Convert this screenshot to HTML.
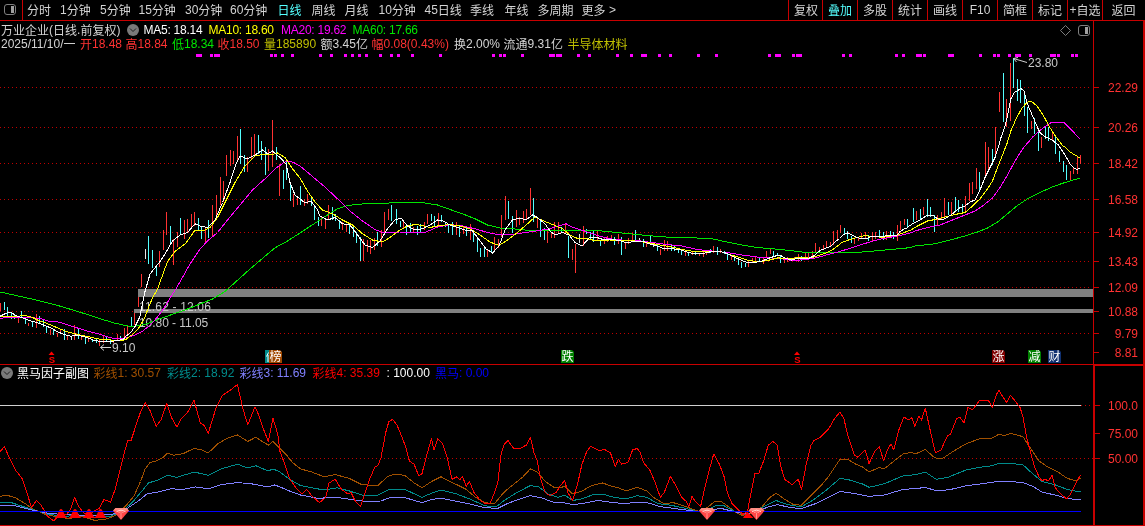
<!DOCTYPE html>
<html><head><meta charset="utf-8"><title>chart</title>
<style>
html,body{margin:0;padding:0;background:#000;}
#root{position:relative;width:1145px;height:526px;background:#000;overflow:hidden;font-family:'Liberation Sans','Noto Sans CJK SC',sans-serif;font-size:12px;}
svg{position:absolute;left:0;top:0;will-change:transform;}
#tx{position:absolute;left:0;top:0;width:1145px;height:526px;will-change:transform;}
.t{position:absolute;white-space:nowrap;line-height:16px;height:16px;font-size:12px;}
.c{position:relative;top:1px;}
.m{position:absolute;width:13px;height:13px;line-height:15px;font-size:12px;color:#fff;text-align:center;white-space:nowrap;overflow:hidden;clip-path:polygon(0 0,11px 0,13px 2px,13px 13px,0 13px);}
</style></head><body>
<div id="root">
<svg width="1145" height="526" viewBox="0 0 1145 526">
<line x1="0" x2="1090" y1="87.5" y2="87.5" stroke="#c00000" stroke-width="1" stroke-dasharray="1 3" shape-rendering="crispEdges"/>
<line x1="1093" x2="1099" y1="87.5" y2="87.5" stroke="#c80000" stroke-width="1" shape-rendering="crispEdges"/>
<line x1="0" x2="1090" y1="127.5" y2="127.5" stroke="#c00000" stroke-width="1" stroke-dasharray="1 3" shape-rendering="crispEdges"/>
<line x1="1093" x2="1099" y1="127.5" y2="127.5" stroke="#c80000" stroke-width="1" shape-rendering="crispEdges"/>
<line x1="0" x2="1090" y1="163.5" y2="163.5" stroke="#c00000" stroke-width="1" stroke-dasharray="1 3" shape-rendering="crispEdges"/>
<line x1="1093" x2="1099" y1="163.5" y2="163.5" stroke="#c80000" stroke-width="1" shape-rendering="crispEdges"/>
<line x1="0" x2="1090" y1="199.5" y2="199.5" stroke="#c00000" stroke-width="1" stroke-dasharray="1 3" shape-rendering="crispEdges"/>
<line x1="1093" x2="1099" y1="199.5" y2="199.5" stroke="#c80000" stroke-width="1" shape-rendering="crispEdges"/>
<line x1="0" x2="1090" y1="232.5" y2="232.5" stroke="#c00000" stroke-width="1" stroke-dasharray="1 3" shape-rendering="crispEdges"/>
<line x1="1093" x2="1099" y1="232.5" y2="232.5" stroke="#c80000" stroke-width="1" shape-rendering="crispEdges"/>
<line x1="0" x2="1090" y1="261.5" y2="261.5" stroke="#c00000" stroke-width="1" stroke-dasharray="1 3" shape-rendering="crispEdges"/>
<line x1="1093" x2="1099" y1="261.5" y2="261.5" stroke="#c80000" stroke-width="1" shape-rendering="crispEdges"/>
<line x1="0" x2="1090" y1="287.5" y2="287.5" stroke="#c00000" stroke-width="1" stroke-dasharray="1 3" shape-rendering="crispEdges"/>
<line x1="1093" x2="1099" y1="287.5" y2="287.5" stroke="#c80000" stroke-width="1" shape-rendering="crispEdges"/>
<line x1="0" x2="1090" y1="311.5" y2="311.5" stroke="#c00000" stroke-width="1" stroke-dasharray="1 3" shape-rendering="crispEdges"/>
<line x1="1093" x2="1099" y1="311.5" y2="311.5" stroke="#c80000" stroke-width="1" shape-rendering="crispEdges"/>
<line x1="0" x2="1090" y1="333.5" y2="333.5" stroke="#c00000" stroke-width="1" stroke-dasharray="1 3" shape-rendering="crispEdges"/>
<line x1="1093" x2="1099" y1="333.5" y2="333.5" stroke="#c80000" stroke-width="1" shape-rendering="crispEdges"/>
<line x1="1093" x2="1099" y1="352.5" y2="352.5" stroke="#c80000" stroke-width="1" shape-rendering="crispEdges"/>
<rect x="0" y="303" width="1" height="8" fill="#ff3232"/>
<rect x="4" y="302" width="1" height="8" fill="#54ffff"/>
<rect x="7" y="307" width="1" height="10" fill="#54ffff"/>
<rect x="11" y="312" width="1" height="7" fill="#54ffff"/>
<rect x="14" y="314" width="1" height="5" fill="#54ffff"/>
<rect x="18" y="316" width="1" height="7" fill="#ff3232"/>
<rect x="21" y="311" width="1" height="7" fill="#54ffff"/>
<rect x="25" y="318" width="1" height="6" fill="#54ffff"/>
<rect x="28" y="323" width="1" height="3" fill="#ff3232"/>
<rect x="32" y="322" width="1" height="5" fill="#54ffff"/>
<rect x="36" y="314" width="1" height="14" fill="#ff3232"/>
<rect x="39" y="316" width="1" height="8" fill="#54ffff"/>
<rect x="43" y="320" width="1" height="7" fill="#54ffff"/>
<rect x="46" y="326" width="1" height="7" fill="#54ffff"/>
<rect x="50" y="329" width="1" height="6" fill="#ff3232"/>
<rect x="53" y="329" width="1" height="6" fill="#54ffff"/>
<rect x="57" y="333" width="1" height="4" fill="#ff3232"/>
<rect x="60" y="329" width="1" height="5" fill="#ff3232"/>
<rect x="64" y="329" width="1" height="11" fill="#54ffff"/>
<rect x="67" y="336" width="1" height="4" fill="#ff3232"/>
<rect x="71" y="336" width="1" height="4" fill="#e6e6e6"/>
<rect x="74" y="325" width="1" height="15" fill="#ff3232"/>
<rect x="78" y="329" width="1" height="10" fill="#54ffff"/>
<rect x="81" y="336" width="1" height="4" fill="#ff3232"/>
<rect x="85" y="337" width="1" height="7" fill="#54ffff"/>
<rect x="88" y="337" width="1" height="5" fill="#ff3232"/>
<rect x="92" y="339" width="1" height="3" fill="#54ffff"/>
<rect x="96" y="339" width="1" height="4" fill="#54ffff"/>
<rect x="99" y="340" width="1" height="6" fill="#ff3232"/>
<rect x="103" y="336" width="1" height="7" fill="#ff3232"/>
<rect x="106" y="337" width="1" height="4" fill="#54ffff"/>
<rect x="110" y="340" width="1" height="4" fill="#54ffff"/>
<rect x="113" y="340" width="1" height="3" fill="#ff3232"/>
<rect x="117" y="334" width="1" height="7" fill="#ff3232"/>
<rect x="120" y="336" width="1" height="3" fill="#54ffff"/>
<rect x="124" y="328" width="1" height="10" fill="#ff3232"/>
<rect x="127" y="326" width="1" height="8" fill="#ff3232"/>
<rect x="131" y="317" width="1" height="10" fill="#54ffff"/>
<rect x="134" y="312" width="1" height="13" fill="#ff3232"/>
<rect x="138" y="290" width="1" height="17" fill="#ff3232"/>
<rect x="141" y="274" width="1" height="13" fill="#ff3232"/>
<rect x="145" y="249" width="1" height="10" fill="#e6e6e6"/>
<rect x="148" y="236" width="1" height="28" fill="#54ffff"/>
<rect x="152" y="250" width="1" height="18" fill="#54ffff"/>
<rect x="156" y="266" width="1" height="10" fill="#54ffff"/>
<rect x="159" y="251" width="1" height="16" fill="#ff3232"/>
<rect x="163" y="230" width="1" height="20" fill="#ff3232"/>
<rect x="166" y="212" width="1" height="23" fill="#ff3232"/>
<rect x="170" y="226" width="1" height="18" fill="#54ffff"/>
<rect x="173" y="239" width="1" height="26" fill="#ff3232"/>
<rect x="177" y="232" width="1" height="15" fill="#ff3232"/>
<rect x="180" y="218" width="1" height="17" fill="#54ffff"/>
<rect x="184" y="220" width="1" height="19" fill="#ff3232"/>
<rect x="187" y="219" width="1" height="13" fill="#ff3232"/>
<rect x="191" y="214" width="1" height="14" fill="#ff3232"/>
<rect x="194" y="212" width="1" height="14" fill="#ff3232"/>
<rect x="198" y="218" width="1" height="13" fill="#54ffff"/>
<rect x="201" y="226" width="1" height="13" fill="#54ffff"/>
<rect x="205" y="228" width="1" height="14" fill="#ff3232"/>
<rect x="208" y="220" width="1" height="18" fill="#54ffff"/>
<rect x="212" y="205" width="1" height="31" fill="#ff3232"/>
<rect x="216" y="195" width="1" height="25" fill="#ff3232"/>
<rect x="220" y="177" width="1" height="28" fill="#ff3232"/>
<rect x="223" y="181" width="1" height="21" fill="#ff3232"/>
<rect x="226" y="155" width="1" height="21" fill="#ff3232"/>
<rect x="230" y="150" width="1" height="16" fill="#ff3232"/>
<rect x="233" y="151" width="1" height="13" fill="#ff3232"/>
<rect x="237" y="136" width="1" height="24" fill="#ff3232"/>
<rect x="240" y="129" width="1" height="35" fill="#54ffff"/>
<rect x="244" y="155" width="1" height="17" fill="#54ffff"/>
<rect x="247" y="157" width="1" height="15" fill="#ff3232"/>
<rect x="251" y="137" width="1" height="22" fill="#ff3232"/>
<rect x="254" y="134" width="1" height="21" fill="#ff3232"/>
<rect x="258" y="135" width="1" height="19" fill="#54ffff"/>
<rect x="261" y="141" width="1" height="19" fill="#54ffff"/>
<rect x="265" y="147" width="1" height="28" fill="#54ffff"/>
<rect x="268" y="149" width="1" height="22" fill="#ff3232"/>
<rect x="272" y="120" width="1" height="47" fill="#ff3232"/>
<rect x="276" y="147" width="1" height="13" fill="#54ffff"/>
<rect x="279" y="164" width="1" height="32" fill="#ff3232"/>
<rect x="283" y="170" width="1" height="19" fill="#54ffff"/>
<rect x="286" y="162" width="1" height="18" fill="#54ffff"/>
<rect x="290" y="182" width="1" height="19" fill="#54ffff"/>
<rect x="293" y="194" width="1" height="13" fill="#ff3232"/>
<rect x="297" y="196" width="1" height="9" fill="#ff3232"/>
<rect x="300" y="186" width="1" height="19" fill="#54ffff"/>
<rect x="304" y="199" width="1" height="7" fill="#ff3232"/>
<rect x="307" y="194" width="1" height="10" fill="#ff3232"/>
<rect x="311" y="197" width="1" height="9" fill="#54ffff"/>
<rect x="314" y="206" width="1" height="14" fill="#54ffff"/>
<rect x="318" y="217" width="1" height="9" fill="#54ffff"/>
<rect x="321" y="217" width="1" height="9" fill="#ff3232"/>
<rect x="325" y="220" width="1" height="9" fill="#ff3232"/>
<rect x="328" y="205" width="1" height="15" fill="#ff3232"/>
<rect x="332" y="207" width="1" height="13" fill="#54ffff"/>
<rect x="335" y="214" width="1" height="7" fill="#54ffff"/>
<rect x="339" y="220" width="1" height="9" fill="#54ffff"/>
<rect x="342" y="222" width="1" height="8" fill="#ff3232"/>
<rect x="346" y="224" width="1" height="8" fill="#ff3232"/>
<rect x="349" y="224" width="1" height="10" fill="#54ffff"/>
<rect x="353" y="225" width="1" height="12" fill="#54ffff"/>
<rect x="356" y="232" width="1" height="11" fill="#54ffff"/>
<rect x="360" y="237" width="1" height="24" fill="#54ffff"/>
<rect x="363" y="239" width="1" height="22" fill="#ff3232"/>
<rect x="367" y="240" width="1" height="12" fill="#ff3232"/>
<rect x="370" y="240" width="1" height="14" fill="#ff3232"/>
<rect x="374" y="238" width="1" height="12" fill="#ff3232"/>
<rect x="377" y="232" width="1" height="14" fill="#54ffff"/>
<rect x="381" y="230" width="1" height="17" fill="#ff3232"/>
<rect x="384" y="212" width="1" height="20" fill="#ff3232"/>
<rect x="388" y="209" width="1" height="11" fill="#ff3232"/>
<rect x="391" y="205" width="1" height="16" fill="#54ffff"/>
<rect x="396" y="209" width="1" height="15" fill="#54ffff"/>
<rect x="400" y="221" width="1" height="6" fill="#54ffff"/>
<rect x="403" y="220" width="1" height="8" fill="#ff3232"/>
<rect x="406" y="224" width="1" height="11" fill="#54ffff"/>
<rect x="410" y="223" width="1" height="10" fill="#54ffff"/>
<rect x="413" y="227" width="1" height="6" fill="#ff3232"/>
<rect x="417" y="226" width="1" height="9" fill="#54ffff"/>
<rect x="420" y="224" width="1" height="8" fill="#54ffff"/>
<rect x="424" y="222" width="1" height="8" fill="#ff3232"/>
<rect x="427" y="214" width="1" height="10" fill="#ff3232"/>
<rect x="431" y="214" width="1" height="7" fill="#54ffff"/>
<rect x="434" y="216" width="1" height="11" fill="#54ffff"/>
<rect x="438" y="213" width="1" height="13" fill="#ff3232"/>
<rect x="441" y="215" width="1" height="7" fill="#54ffff"/>
<rect x="445" y="222" width="1" height="5" fill="#54ffff"/>
<rect x="448" y="224" width="1" height="9" fill="#54ffff"/>
<rect x="452" y="222" width="1" height="13" fill="#54ffff"/>
<rect x="456" y="222" width="1" height="13" fill="#ff3232"/>
<rect x="459" y="226" width="1" height="11" fill="#54ffff"/>
<rect x="463" y="226" width="1" height="8" fill="#ff3232"/>
<rect x="466" y="228" width="1" height="8" fill="#54ffff"/>
<rect x="470" y="224" width="1" height="16" fill="#ff3232"/>
<rect x="473" y="230" width="1" height="12" fill="#54ffff"/>
<rect x="477" y="238" width="1" height="14" fill="#54ffff"/>
<rect x="480" y="248" width="1" height="9" fill="#54ffff"/>
<rect x="484" y="248" width="1" height="9" fill="#54ffff"/>
<rect x="487" y="250" width="1" height="7" fill="#ff3232"/>
<rect x="491" y="246" width="1" height="7" fill="#54ffff"/>
<rect x="494" y="237" width="1" height="13" fill="#ff3232"/>
<rect x="498" y="239" width="1" height="9" fill="#ff3232"/>
<rect x="501" y="215" width="1" height="22" fill="#ff3232"/>
<rect x="505" y="196" width="1" height="24" fill="#ff3232"/>
<rect x="508" y="201" width="1" height="18" fill="#54ffff"/>
<rect x="512" y="216" width="1" height="17" fill="#54ffff"/>
<rect x="516" y="210" width="1" height="17" fill="#ff3232"/>
<rect x="519" y="217" width="1" height="8" fill="#ff3232"/>
<rect x="523" y="211" width="1" height="12" fill="#ff3232"/>
<rect x="526" y="209" width="1" height="11" fill="#ff3232"/>
<rect x="530" y="188" width="1" height="27" fill="#ff3232"/>
<rect x="533" y="198" width="1" height="24" fill="#54ffff"/>
<rect x="537" y="219" width="1" height="9" fill="#ff3232"/>
<rect x="540" y="220" width="1" height="17" fill="#54ffff"/>
<rect x="544" y="228" width="1" height="12" fill="#54ffff"/>
<rect x="547" y="231" width="1" height="12" fill="#ff3232"/>
<rect x="551" y="232" width="1" height="6" fill="#ff3232"/>
<rect x="554" y="222" width="1" height="16" fill="#ff3232"/>
<rect x="558" y="222" width="1" height="11" fill="#ff3232"/>
<rect x="561" y="227" width="1" height="5" fill="#54ffff"/>
<rect x="565" y="223" width="1" height="11" fill="#ff3232"/>
<rect x="568" y="236" width="1" height="22" fill="#54ffff"/>
<rect x="572" y="249" width="1" height="11" fill="#ff3232"/>
<rect x="575" y="244" width="1" height="29" fill="#ff3232"/>
<rect x="579" y="234" width="1" height="9" fill="#e6e6e6"/>
<rect x="583" y="226" width="1" height="20" fill="#ff3232"/>
<rect x="586" y="229" width="1" height="5" fill="#54ffff"/>
<rect x="590" y="232" width="1" height="8" fill="#54ffff"/>
<rect x="593" y="231" width="1" height="11" fill="#54ffff"/>
<rect x="597" y="231" width="1" height="10" fill="#ff3232"/>
<rect x="600" y="240" width="1" height="6" fill="#54ffff"/>
<rect x="604" y="238" width="1" height="6" fill="#ff3232"/>
<rect x="607" y="236" width="1" height="6" fill="#ff3232"/>
<rect x="611" y="235" width="1" height="5" fill="#ff3232"/>
<rect x="614" y="237" width="1" height="8" fill="#54ffff"/>
<rect x="618" y="234" width="1" height="10" fill="#ff3232"/>
<rect x="621" y="237" width="1" height="18" fill="#54ffff"/>
<rect x="625" y="243" width="1" height="6" fill="#ff3232"/>
<rect x="628" y="238" width="1" height="6" fill="#ff3232"/>
<rect x="632" y="233" width="1" height="7" fill="#ff3232"/>
<rect x="635" y="230" width="1" height="10" fill="#54ffff"/>
<rect x="639" y="238" width="1" height="2" fill="#e6e6e6"/>
<rect x="643" y="239" width="1" height="8" fill="#54ffff"/>
<rect x="646" y="242" width="1" height="5" fill="#ff3232"/>
<rect x="650" y="236" width="1" height="9" fill="#54ffff"/>
<rect x="653" y="244" width="1" height="3" fill="#e6e6e6"/>
<rect x="657" y="243" width="1" height="8" fill="#54ffff"/>
<rect x="660" y="249" width="1" height="6" fill="#ff3232"/>
<rect x="664" y="240" width="1" height="11" fill="#ff3232"/>
<rect x="667" y="241" width="1" height="10" fill="#ff3232"/>
<rect x="671" y="244" width="1" height="7" fill="#54ffff"/>
<rect x="674" y="245" width="1" height="6" fill="#54ffff"/>
<rect x="678" y="249" width="1" height="4" fill="#54ffff"/>
<rect x="681" y="249" width="1" height="6" fill="#54ffff"/>
<rect x="685" y="251" width="1" height="5" fill="#ff3232"/>
<rect x="688" y="252" width="1" height="4" fill="#54ffff"/>
<rect x="692" y="251" width="1" height="4" fill="#ff3232"/>
<rect x="695" y="251" width="1" height="4" fill="#54ffff"/>
<rect x="699" y="253" width="1" height="3" fill="#ff3232"/>
<rect x="703" y="251" width="1" height="6" fill="#ff3232"/>
<rect x="706" y="250" width="1" height="5" fill="#ff3232"/>
<rect x="710" y="249" width="1" height="4" fill="#54ffff"/>
<rect x="713" y="246" width="1" height="7" fill="#ff3232"/>
<rect x="717" y="247" width="1" height="8" fill="#54ffff"/>
<rect x="720" y="249" width="1" height="4" fill="#ff3232"/>
<rect x="724" y="251" width="1" height="3" fill="#54ffff"/>
<rect x="727" y="254" width="1" height="6" fill="#54ffff"/>
<rect x="731" y="255" width="1" height="5" fill="#ff3232"/>
<rect x="734" y="257" width="1" height="4" fill="#54ffff"/>
<rect x="738" y="259" width="1" height="6" fill="#54ffff"/>
<rect x="741" y="262" width="1" height="6" fill="#54ffff"/>
<rect x="745" y="263" width="1" height="4" fill="#54ffff"/>
<rect x="748" y="261" width="1" height="6" fill="#ff3232"/>
<rect x="752" y="258" width="1" height="4" fill="#ff3232"/>
<rect x="755" y="257" width="1" height="5" fill="#ff3232"/>
<rect x="759" y="258" width="1" height="4" fill="#54ffff"/>
<rect x="763" y="258" width="1" height="6" fill="#ff3232"/>
<rect x="766" y="251" width="1" height="7" fill="#ff3232"/>
<rect x="770" y="249" width="1" height="5" fill="#ff3232"/>
<rect x="773" y="251" width="1" height="6" fill="#54ffff"/>
<rect x="777" y="253" width="1" height="3" fill="#54ffff"/>
<rect x="780" y="256" width="1" height="7" fill="#54ffff"/>
<rect x="784" y="259" width="1" height="4" fill="#ff3232"/>
<rect x="787" y="257" width="1" height="5" fill="#ff3232"/>
<rect x="791" y="259" width="1" height="2" fill="#e6e6e6"/>
<rect x="794" y="257" width="1" height="3" fill="#ff3232"/>
<rect x="798" y="254" width="1" height="8" fill="#ff3232"/>
<rect x="801" y="256" width="1" height="5" fill="#54ffff"/>
<rect x="805" y="253" width="1" height="6" fill="#ff3232"/>
<rect x="808" y="253" width="1" height="6" fill="#ff3232"/>
<rect x="812" y="251" width="1" height="5" fill="#ff3232"/>
<rect x="815" y="243" width="1" height="10" fill="#ff3232"/>
<rect x="819" y="247" width="1" height="4" fill="#ff3232"/>
<rect x="823" y="245" width="1" height="4" fill="#ff3232"/>
<rect x="826" y="241" width="1" height="7" fill="#ff3232"/>
<rect x="830" y="242" width="1" height="5" fill="#ff3232"/>
<rect x="833" y="231" width="1" height="14" fill="#ff3232"/>
<rect x="837" y="230" width="1" height="10" fill="#ff3232"/>
<rect x="840" y="225" width="1" height="8" fill="#ff3232"/>
<rect x="844" y="228" width="1" height="7" fill="#54ffff"/>
<rect x="847" y="231" width="1" height="8" fill="#54ffff"/>
<rect x="851" y="236" width="1" height="7" fill="#54ffff"/>
<rect x="854" y="238" width="1" height="6" fill="#ff3232"/>
<rect x="858" y="237" width="1" height="4" fill="#ff3232"/>
<rect x="861" y="233" width="1" height="5" fill="#ff3232"/>
<rect x="865" y="232" width="1" height="6" fill="#ff3232"/>
<rect x="868" y="235" width="1" height="6" fill="#54ffff"/>
<rect x="872" y="232" width="1" height="9" fill="#ff3232"/>
<rect x="875" y="232" width="1" height="7" fill="#ff3232"/>
<rect x="879" y="230" width="1" height="7" fill="#54ffff"/>
<rect x="883" y="232" width="1" height="8" fill="#54ffff"/>
<rect x="886" y="231" width="1" height="9" fill="#ff3232"/>
<rect x="890" y="231" width="1" height="6" fill="#54ffff"/>
<rect x="893" y="232" width="1" height="7" fill="#54ffff"/>
<rect x="897" y="225" width="1" height="16" fill="#ff3232"/>
<rect x="900" y="221" width="1" height="9" fill="#ff3232"/>
<rect x="904" y="219" width="1" height="6" fill="#ff3232"/>
<rect x="907" y="219" width="1" height="8" fill="#54ffff"/>
<rect x="913" y="208" width="1" height="14" fill="#54ffff"/>
<rect x="916" y="211" width="1" height="9" fill="#ff3232"/>
<rect x="920" y="209" width="1" height="11" fill="#54ffff"/>
<rect x="923" y="207" width="1" height="8" fill="#ff3232"/>
<rect x="927" y="199" width="1" height="18" fill="#54ffff"/>
<rect x="930" y="207" width="1" height="10" fill="#54ffff"/>
<rect x="934" y="215" width="1" height="17" fill="#54ffff"/>
<rect x="937" y="215" width="1" height="11" fill="#ff3232"/>
<rect x="941" y="212" width="1" height="8" fill="#ff3232"/>
<rect x="944" y="198" width="1" height="19" fill="#ff3232"/>
<rect x="948" y="202" width="1" height="13" fill="#54ffff"/>
<rect x="951" y="202" width="1" height="14" fill="#ff3232"/>
<rect x="955" y="197" width="1" height="14" fill="#54ffff"/>
<rect x="958" y="200" width="1" height="12" fill="#54ffff"/>
<rect x="962" y="204" width="1" height="8" fill="#54ffff"/>
<rect x="965" y="196" width="1" height="15" fill="#ff3232"/>
<rect x="969" y="183" width="1" height="18" fill="#ff3232"/>
<rect x="972" y="182" width="1" height="12" fill="#ff3232"/>
<rect x="976" y="168" width="1" height="21" fill="#ff3232"/>
<rect x="979" y="172" width="1" height="18" fill="#54ffff"/>
<rect x="985" y="142" width="1" height="35" fill="#ff3232"/>
<rect x="988" y="147" width="1" height="22" fill="#ff3232"/>
<rect x="992" y="149" width="1" height="16" fill="#54ffff"/>
<rect x="995" y="127" width="1" height="30" fill="#ff3232"/>
<rect x="999" y="92" width="1" height="20" fill="#ff3232"/>
<rect x="1003" y="73" width="1" height="49" fill="#54ffff"/>
<rect x="1006" y="99" width="1" height="28" fill="#ff3232"/>
<rect x="1010" y="63" width="1" height="58" fill="#ff3232"/>
<rect x="1013" y="58" width="1" height="30" fill="#54ffff"/>
<rect x="1017" y="79" width="1" height="22" fill="#54ffff"/>
<rect x="1020" y="80" width="1" height="23" fill="#54ffff"/>
<rect x="1024" y="95" width="1" height="21" fill="#54ffff"/>
<rect x="1027" y="107" width="1" height="26" fill="#54ffff"/>
<rect x="1031" y="121" width="1" height="8" fill="#ff3232"/>
<rect x="1034" y="118" width="1" height="16" fill="#54ffff"/>
<rect x="1038" y="131" width="1" height="20" fill="#54ffff"/>
<rect x="1041" y="137" width="1" height="11" fill="#ff3232"/>
<rect x="1045" y="127" width="1" height="12" fill="#54ffff"/>
<rect x="1048" y="127" width="1" height="14" fill="#54ffff"/>
<rect x="1052" y="131" width="1" height="10" fill="#ff3232"/>
<rect x="1055" y="137" width="1" height="17" fill="#54ffff"/>
<rect x="1059" y="151" width="1" height="11" fill="#54ffff"/>
<rect x="1063" y="161" width="1" height="11" fill="#54ffff"/>
<rect x="1066" y="165" width="1" height="15" fill="#54ffff"/>
<rect x="1070" y="171" width="1" height="9" fill="#ff3232"/>
<rect x="1073" y="168" width="1" height="6" fill="#ff3232"/>
<rect x="1077" y="157" width="1" height="17" fill="#ff3232"/>
<rect x="1080" y="155" width="1" height="9" fill="#ff3232"/>
<rect x="138" y="289" width="955" height="8" fill="#808080"/>
<rect x="134" y="309" width="959" height="4" fill="#808080"/>
<text x="139" y="311" fill="#c8c8c8" font-size="12" letter-spacing="0.17" font-family="'Liberation Sans',sans-serif">11.62 - 12.06</text>
<text x="139" y="327" fill="#c8c8c8" font-size="12" letter-spacing="-0.05" font-family="'Liberation Sans',sans-serif">10.80 - 11.05</text>
<polyline points="0.0,292.0 13.7,295.0 34.3,299.6 57.2,305.3 80.0,312.2 103.0,319.6 114.4,323.0 125.9,325.7 131.0,326.5 132.5,326.5 145.0,324.5 162.5,317.8 187.5,309.0 212.5,299.0 225.0,291.5 250.0,269.0 275.0,247.8 287.5,241.0 300.0,233.0 312.5,224.8 325.0,216.5 337.5,208.8 347.5,205.5 362.5,204.0 380.0,203.8 395.0,202.5 410.0,202.5 425.0,203.0 437.5,205.0 450.0,209.5 462.5,213.8 475.0,218.8 487.5,225.0 500.0,228.0 512.5,228.8 525.0,230.0 540.0,230.5 562.5,230.8 597.0,230.5 622.0,233.0 647.0,235.5 672.0,237.5 697.0,238.0 712.0,238.8 727.0,242.0 742.0,245.0 757.0,247.5 772.0,248.8 780.0,249.3 786.9,250.2 797.2,251.4 805.2,252.5 837.2,252.5 860.0,252.2 877.3,250.7 892.1,249.3 903.6,248.4 911.0,247.4 915.0,246.0 935.0,243.8 950.0,240.0 965.0,236.0 977.5,232.0 987.5,228.0 997.5,222.0 1007.5,213.8 1017.5,205.5 1027.5,198.8 1040.0,192.5 1052.5,186.8 1065.0,182.5 1080.0,178.0" fill="none" stroke="#00e600" stroke-width="1" stroke-linejoin="round" shape-rendering="crispEdges" />
<polyline points="0.0,318.5 6.9,317.3 22.9,317.3 34.3,317.9 41.2,318.8 48.0,321.1 57.2,321.9 64.0,323.6 71.0,325.9 80.0,328.8 89.2,331.6 98.4,333.9 107.6,336.8 113.3,338.5 121.3,338.7 125.2,338.0 134.9,335.2 141.9,331.7 148.9,326.1 154.5,320.5 160.1,313.5 165.0,306.6 169.9,298.2 176.2,288.4 181.0,280.0 190.0,264.0 200.0,249.0 207.5,241.0 217.5,232.5 227.5,220.0 240.0,205.0 252.5,190.0 265.0,178.8 275.0,168.8 285.0,161.8 292.5,162.0 300.0,166.0 312.5,176.5 325.0,187.0 337.5,198.8 350.0,211.0 362.5,221.0 375.0,229.5 382.5,232.5 400.0,232.0 412.5,233.0 425.0,232.5 437.5,227.0 450.0,224.5 462.5,226.0 475.0,228.8 487.5,232.5 500.0,235.0 512.5,234.5 525.0,232.5 537.5,230.8 550.0,228.8 560.0,225.5 566.0,223.8 572.0,227.0 584.5,231.0 597.0,235.5 609.5,238.8 622.0,240.0 637.0,240.5 652.0,242.5 667.0,244.5 682.0,246.0 697.0,249.5 712.0,251.0 727.0,252.5 742.0,255.0 757.0,257.0 772.0,258.0 780.0,258.5 791.4,260.5 802.9,259.8 812.0,258.7 820.0,256.8 828.0,254.5 837.2,252.2 848.6,248.8 860.0,245.0 871.5,241.5 883.0,238.5 894.4,236.5 903.6,234.7 911.0,232.7 915.0,231.0 927.5,227.5 940.0,225.0 952.5,220.0 965.0,215.0 975.0,211.0 982.5,206.0 992.5,198.0 1000.0,187.5 1007.5,175.0 1015.0,161.0 1022.5,149.0 1032.7,137.0 1041.0,129.5 1052.0,122.0 1063.7,122.0 1071.0,129.5 1080.0,139.0" fill="none" stroke="#ff00ff" stroke-width="1" stroke-linejoin="round" shape-rendering="crispEdges" />
<polyline points="0.0,316.7 6.9,316.2 17.2,316.2 25.2,315.6 32.0,317.3 37.8,320.2 45.8,323.0 51.5,325.3 59.5,328.8 68.6,332.2 77.8,334.5 87.0,336.4 95.0,338.2 100.7,339.4 109.8,339.6 114.4,341.0 121.3,340.8 125.9,339.6 127.9,337.6 133.5,333.8 139.1,327.5 144.7,317.7 148.9,306.6 152.4,298.2 158.0,288.4 160.8,280.0 167.5,261.5 175.0,251.5 185.0,244.0 187.5,241.0 195.0,230.0 202.5,231.0 210.0,227.5 217.5,217.5 225.0,202.5 235.0,182.5 245.0,166.0 255.0,156.0 262.5,154.5 270.0,155.0 277.5,153.0 285.0,157.5 292.5,168.8 300.0,178.0 307.5,191.0 315.0,202.0 322.5,210.0 332.5,213.8 342.5,220.0 352.5,225.0 362.5,233.8 372.5,240.0 382.5,242.0 390.0,237.5 400.0,230.0 407.5,226.0 415.0,224.5 422.5,225.5 430.0,227.5 440.0,225.5 450.0,224.5 460.0,226.0 470.0,228.8 480.0,235.0 490.0,242.0 499.0,245.5 507.5,240.0 517.5,232.5 527.5,223.8 535.0,217.0 542.5,220.5 552.5,224.5 562.5,228.8 570.0,235.0 577.5,238.5 587.0,238.8 597.0,241.0 609.5,240.0 622.0,240.5 634.5,241.0 647.0,242.5 659.5,245.0 672.0,247.0 684.5,250.0 697.0,252.0 709.5,251.0 722.0,252.0 734.5,256.0 747.0,260.0 759.5,262.0 769.5,260.0 779.5,257.5 780.0,259.0 791.4,258.5 799.5,257.3 809.7,258.2 814.3,257.0 820.0,255.0 828.0,252.2 834.9,248.2 841.8,242.5 848.6,240.0 855.5,237.9 864.7,235.6 871.5,236.5 883.0,237.3 889.8,236.2 897.8,235.0 903.6,232.7 911.0,229.9 917.5,226.0 927.5,221.0 935.0,219.5 945.0,217.0 955.0,214.5 965.0,212.5 972.5,206.0 980.0,198.8 987.5,188.8 992.5,181.0 997.5,167.5 1002.5,155.0 1007.0,143.5 1011.0,130.5 1016.6,117.8 1022.0,108.0 1027.0,102.3 1031.0,101.0 1037.0,106.0 1043.4,115.6 1049.8,127.4 1056.0,137.0 1062.6,145.6 1065.0,147.0 1070.0,152.0 1075.0,155.0 1080.0,158.0" fill="none" stroke="#ffff00" stroke-width="1" stroke-linejoin="round" shape-rendering="crispEdges" />
<polyline points="0.0,316.2 4.6,313.9 8.6,312.2 11.4,312.7 16.0,315.6 22.9,317.9 28.6,320.2 34.3,321.9 40.0,323.6 45.8,325.9 51.5,328.2 57.2,331.6 64.0,334.5 71.0,336.2 75.5,335.0 82.4,336.2 88.0,337.9 93.8,340.2 99.5,341.3 109.8,341.3 116.7,340.8 123.6,339.0 125.9,336.2 131.0,332.2 135.0,326.5 140.0,316.5 145.0,291.5 150.0,274.0 160.0,261.5 165.0,254.0 172.5,241.0 180.0,235.0 187.5,232.5 195.0,223.8 200.0,226.0 207.5,227.5 215.0,220.0 222.5,202.5 230.0,182.5 236.0,163.8 240.0,156.0 247.5,158.8 255.0,155.0 262.5,150.0 267.5,153.8 272.5,151.0 280.0,157.5 286.0,163.8 290.0,182.5 295.0,195.0 300.0,198.8 305.0,203.0 311.0,201.0 317.5,210.0 320.0,216.0 327.5,220.0 335.0,217.5 342.5,223.8 350.0,225.0 357.5,235.0 365.0,245.0 372.5,247.5 380.0,241.0 387.5,228.8 395.0,220.0 401.0,218.0 407.5,226.0 415.0,230.0 422.5,228.8 430.0,225.0 437.5,220.0 442.5,220.5 450.0,225.0 457.5,227.5 465.0,230.0 472.5,231.0 480.0,241.0 486.0,248.8 492.5,253.0 499.0,246.0 505.0,230.0 512.5,220.0 520.0,218.0 526.0,220.0 532.5,215.0 537.5,217.5 545.0,223.8 550.0,231.0 555.0,235.0 562.5,232.5 569.0,235.0 575.0,242.5 582.0,246.0 589.5,237.5 597.0,237.5 604.5,240.0 612.0,239.5 619.5,240.5 627.0,243.0 634.5,241.0 642.0,241.0 649.5,243.8 657.0,246.0 664.5,248.8 672.0,248.8 679.5,249.5 687.0,252.0 694.5,253.8 702.0,253.8 709.5,252.0 717.0,251.0 724.5,252.5 732.0,256.0 739.5,259.5 747.0,262.5 754.5,262.5 762.0,261.0 769.5,258.0 777.0,255.5 780.0,255.0 783.4,257.3 791.4,260.2 794.9,259.0 801.7,258.7 808.6,258.5 814.3,255.6 820.0,250.5 825.8,248.2 830.3,246.5 834.9,241.9 839.5,238.5 842.9,235.0 847.5,233.0 851.5,234.7 855.5,236.7 860.0,238.5 867.0,238.5 870.4,236.7 883.0,236.7 886.4,235.6 896.7,235.4 900.0,231.6 903.6,229.3 907.6,227.8 909.3,225.5 911.0,225.0 912.5,223.8 920.0,220.0 927.5,215.0 932.5,215.0 939.0,220.0 945.0,218.8 952.5,213.8 960.0,207.5 965.0,206.0 970.0,202.0 975.0,200.0 980.0,190.0 985.0,177.5 990.0,167.5 995.0,157.5 999.0,145.0 1000.5,139.0 1005.0,126.0 1008.0,113.5 1011.0,98.5 1014.5,92.5 1021.0,88.5 1024.0,91.0 1027.0,103.0 1031.5,113.5 1036.0,124.0 1040.0,132.7 1045.5,137.0 1052.0,140.0 1058.0,144.5 1060.0,147.5 1065.0,155.0 1070.0,163.8 1074.0,168.0 1077.5,169.5 1080.0,168.0" fill="none" stroke="#ffffff" stroke-width="1" stroke-linejoin="round" shape-rendering="crispEdges" />
<rect x="196" y="54" width="6" height="3" fill="#ff00ff"/>
<rect x="210" y="54" width="3" height="3" fill="#ff00ff"/>
<rect x="214" y="54" width="6" height="3" fill="#ff00ff"/>
<rect x="270" y="54" width="3" height="3" fill="#ff00ff"/>
<rect x="274" y="54" width="3" height="3" fill="#ff00ff"/>
<rect x="281" y="54" width="3" height="3" fill="#ff00ff"/>
<rect x="291" y="54" width="3" height="3" fill="#ff00ff"/>
<rect x="319" y="54" width="3" height="3" fill="#ff00ff"/>
<rect x="330" y="54" width="3" height="3" fill="#ff00ff"/>
<rect x="344" y="54" width="3" height="3" fill="#ff00ff"/>
<rect x="351" y="54" width="3" height="3" fill="#ff00ff"/>
<rect x="358" y="54" width="3" height="3" fill="#ff00ff"/>
<rect x="365" y="54" width="3" height="3" fill="#ff00ff"/>
<rect x="379" y="54" width="3" height="3" fill="#ff00ff"/>
<rect x="390" y="54" width="3" height="3" fill="#ff00ff"/>
<rect x="397" y="54" width="3" height="3" fill="#ff00ff"/>
<rect x="411" y="54" width="3" height="3" fill="#ff00ff"/>
<rect x="439" y="54" width="3" height="3" fill="#ff00ff"/>
<rect x="492" y="54" width="3" height="3" fill="#ff00ff"/>
<rect x="499" y="54" width="3" height="3" fill="#ff00ff"/>
<rect x="503" y="54" width="3" height="3" fill="#ff00ff"/>
<rect x="521" y="54" width="3" height="3" fill="#ff00ff"/>
<rect x="549" y="54" width="6" height="3" fill="#ff00ff"/>
<rect x="556" y="54" width="6" height="3" fill="#ff00ff"/>
<rect x="577" y="54" width="3" height="3" fill="#ff00ff"/>
<rect x="588" y="54" width="3" height="3" fill="#ff00ff"/>
<rect x="616" y="54" width="3" height="3" fill="#ff00ff"/>
<rect x="630" y="54" width="3" height="3" fill="#ff00ff"/>
<rect x="641" y="54" width="6" height="3" fill="#ff00ff"/>
<rect x="658" y="54" width="3" height="3" fill="#ff00ff"/>
<rect x="669" y="54" width="3" height="3" fill="#ff00ff"/>
<rect x="697" y="54" width="3" height="3" fill="#ff00ff"/>
<rect x="715" y="54" width="3" height="3" fill="#ff00ff"/>
<rect x="768" y="54" width="3" height="3" fill="#ff00ff"/>
<rect x="775" y="54" width="6" height="3" fill="#ff00ff"/>
<rect x="792" y="54" width="3" height="3" fill="#ff00ff"/>
<rect x="796" y="54" width="6" height="3" fill="#ff00ff"/>
<rect x="842" y="54" width="3" height="3" fill="#ff00ff"/>
<rect x="849" y="54" width="3" height="3" fill="#ff00ff"/>
<rect x="895" y="54" width="3" height="3" fill="#ff00ff"/>
<rect x="902" y="54" width="3" height="3" fill="#ff00ff"/>
<rect x="916" y="54" width="6" height="3" fill="#ff00ff"/>
<rect x="923" y="54" width="3" height="3" fill="#ff00ff"/>
<rect x="948" y="54" width="6" height="3" fill="#ff00ff"/>
<rect x="979" y="54" width="3" height="3" fill="#ff00ff"/>
<rect x="993" y="54" width="3" height="3" fill="#ff00ff"/>
<rect x="997" y="54" width="3" height="3" fill="#ff00ff"/>
<rect x="1008" y="54" width="3" height="3" fill="#ff00ff"/>
<rect x="1015" y="54" width="6" height="3" fill="#ff00ff"/>
<rect x="1029" y="54" width="3" height="3" fill="#ff00ff"/>
<rect x="1050" y="54" width="6" height="3" fill="#ff00ff"/>
<rect x="1057" y="54" width="3" height="3" fill="#ff00ff"/>
<rect x="1071" y="54" width="3" height="3" fill="#ff00ff"/>
<rect x="1075" y="54" width="3" height="3" fill="#ff00ff"/>
<path d="M1013.5,58.5 L1027,62.5 M1013.5,58.5 L1018,57.5 M1013.5,58.5 L1016.5,62" stroke="#d0d0d0" stroke-width="1" fill="none"/>
<path d="M100.5,347.5 L111,347.5 M100.5,347.5 L104,344.5 M100.5,347.5 L104,350.5" stroke="#d0d0d0" stroke-width="1" fill="none"/>
<rect x="0" y="20" width="1145" height="1" fill="#c80000"/>
<rect x="22" y="0" width="1" height="20" fill="#c80000"/>
<rect x="788" y="0" width="1" height="20" fill="#c80000"/>
<rect x="822" y="0" width="1" height="20" fill="#c80000"/>
<rect x="857" y="0" width="1" height="20" fill="#c80000"/>
<rect x="892" y="0" width="1" height="20" fill="#c80000"/>
<rect x="927" y="0" width="1" height="20" fill="#c80000"/>
<rect x="962" y="0" width="1" height="20" fill="#c80000"/>
<rect x="997" y="0" width="1" height="20" fill="#c80000"/>
<rect x="1032" y="0" width="1" height="20" fill="#c80000"/>
<rect x="1067" y="0" width="1" height="20" fill="#c80000"/>
<rect x="1102" y="0" width="1" height="20" fill="#c80000"/>
<rect x="1093" y="21" width="1" height="343" fill="#c80000"/>
<rect x="1093" y="364" width="2" height="162" fill="#c80000"/>
<rect x="0" y="364" width="1093" height="1" fill="#c80000"/>
<rect x="1093" y="364" width="52" height="2" fill="#c80000"/>
<rect x="1143" y="21" width="2" height="505" fill="#c80000"/>
<rect x="0" y="525" width="1145" height="1" fill="#c80000"/>
<rect x="0" y="405" width="1081" height="1" fill="#d0d0d0"/>
<line x1="1081" x2="1093" y1="405.5" y2="405.5" stroke="#c00000" stroke-dasharray="1 3" shape-rendering="crispEdges"/>
<line x1="0" x2="1093" y1="458.5" y2="458.5" stroke="#c00000" stroke-dasharray="1 3" shape-rendering="crispEdges"/>
<rect x="1095" y="405" width="5" height="1" fill="#c80000"/>
<rect x="1095" y="433" width="5" height="1" fill="#c80000"/>
<rect x="1095" y="458" width="5" height="1" fill="#c80000"/>
<polyline points="0.0,496.4 6.3,495.0 15.8,498.0 25.3,503.6 31.6,508.4 44.2,514.0 56.8,516.9 69.4,518.5 82.0,516.2 94.7,520.4 107.3,518.8 116.8,514.7 126.3,505.2 134.2,495.7 140.5,481.5 145.2,468.9 150.0,462.6 156.2,461.0 162.6,457.9 167.3,453.0 173.6,455.3 183.0,453.7 194.0,448.4 202.0,450.0 208.3,453.0 217.8,443.6 227.3,438.3 237.4,435.0 247.8,441.4 255.7,437.3 268.3,445.2 273.0,441.4 280.0,448.4 286.3,454.7 292.6,462.6 300.5,468.9 311.6,472.0 324.2,476.8 335.2,474.6 349.4,478.4 362.0,484.7 377.8,485.6 387.3,476.8 393.6,474.3 404.7,475.2 414.1,483.0 422.0,487.8 431.5,481.5 441.0,476.8 447.3,480.0 456.8,484.7 466.2,489.4 475.6,497.3 485.2,502.7 494.6,503.6 501.0,495.7 507.3,489.4 515.2,483.0 523.0,476.8 530.3,468.9 537.3,472.0 545.2,481.5 554.6,487.8 560.0,487.8 564.7,486.3 572.6,494.0 582.0,491.0 591.6,485.6 602.6,483.0 612.0,486.3 618.4,487.8 626.3,491.0 637.3,487.2 646.8,491.0 654.7,498.3 664.2,503.6 673.6,502.7 686.3,506.8 698.9,511.5 708.4,506.8 714.7,501.4 721.0,501.4 727.3,505.8 736.8,513.0 744.7,516.3 752.6,513.0 762.0,506.8 770.0,497.3 776.2,493.2 784.1,498.9 793.6,504.6 801.5,505.2 809.4,497.3 820.4,486.3 828.3,476.8 834.6,467.3 840.0,459.4 847.9,459.5 855.8,464.2 862.0,466.7 869.0,472.0 879.5,467.4 884.2,468.9 892.0,462.6 903.0,454.0 911.0,452.5 915.8,453.8 925.3,449.4 934.7,457.9 942.6,458.5 953.7,451.0 966.3,443.7 979.0,439.0 991.6,438.3 999.0,434.2 1004.2,435.8 1010.5,433.3 1023.0,436.7 1029.5,446.8 1039.0,461.0 1048.4,467.4 1057.9,472.0 1067.4,478.4 1075.2,480.6 1080.6,478.4" fill="none" stroke="#a05000" stroke-width="1" stroke-linejoin="round" shape-rendering="crispEdges" />
<polyline points="0.0,502.0 9.5,502.0 19.0,505.2 31.6,509.3 47.3,514.0 63.0,516.2 82.0,515.6 94.7,517.2 110.5,516.2 123.0,510.9 132.6,502.0 142.0,491.0 148.4,483.0 157.8,480.0 167.3,475.2 176.8,477.4 194.0,472.0 208.3,475.2 221.0,468.9 237.4,464.2 247.8,468.0 255.7,465.7 268.3,471.0 273.0,468.9 280.0,472.0 289.5,479.3 300.5,485.6 311.6,487.8 324.2,490.0 336.8,487.8 349.4,491.0 362.0,495.0 377.8,495.0 389.0,489.4 404.7,489.4 422.0,497.3 431.5,493.2 441.0,490.0 456.8,494.0 469.4,498.9 485.2,505.8 496.2,506.8 504.1,500.5 516.7,492.6 530.3,485.6 538.8,486.9 548.3,494.0 557.8,497.3 564.7,495.0 572.6,500.5 582.0,498.9 594.7,494.0 602.6,494.0 613.7,497.3 626.3,498.9 637.3,495.7 646.8,497.3 657.9,503.6 670.5,505.2 686.3,508.4 698.9,512.0 708.4,510.0 716.2,505.2 724.1,505.8 733.6,510.9 744.7,514.7 755.7,510.9 765.2,505.8 776.2,500.5 787.3,504.6 801.5,506.8 812.5,500.5 825.2,491.0 834.6,483.0 840.0,478.4 849.5,480.0 862.0,483.8 869.0,487.3 884.2,483.8 903.0,475.9 915.8,474.6 925.3,472.0 936.3,479.3 947.4,477.5 966.3,469.9 979.0,467.4 991.6,465.8 999.0,463.3 1010.5,463.3 1023.0,464.8 1032.6,473.7 1042.0,481.6 1054.7,484.7 1067.4,489.5 1075.2,491.0 1080.6,491.0" fill="none" stroke="#008b8b" stroke-width="1" stroke-linejoin="round" shape-rendering="crispEdges" />
<polyline points="0.0,505.2 12.6,505.2 31.6,510.0 47.3,513.0 63.0,514.7 94.7,515.3 113.6,514.0 126.3,509.0 139.0,500.5 146.8,494.0 157.8,492.0 170.5,488.8 183.0,489.4 195.7,486.9 208.3,488.8 221.0,484.7 237.4,482.5 252.5,484.0 268.3,486.9 274.6,485.0 280.0,486.9 289.5,491.0 300.5,495.0 317.9,498.3 336.8,497.3 352.6,499.8 365.2,501.4 381.0,501.0 390.5,497.3 406.2,498.0 422.0,502.7 431.5,499.5 441.0,498.3 456.8,501.4 472.5,504.6 485.2,507.7 497.8,508.4 507.3,503.6 519.9,498.9 530.3,495.7 542.0,498.0 554.6,502.7 560.0,502.0 572.6,504.6 582.0,503.6 597.9,500.5 613.7,502.7 626.3,503.6 637.3,502.0 648.4,503.0 661.0,506.8 686.3,510.0 698.9,512.0 711.5,510.0 721.0,508.4 733.6,511.5 746.2,514.0 758.9,510.9 768.3,506.8 777.8,504.6 790.4,507.7 801.5,508.4 815.7,503.6 828.3,497.3 840.0,491.5 852.6,493.2 869.0,496.4 884.2,495.0 903.0,489.5 925.3,487.6 937.9,491.0 950.5,489.5 966.3,485.7 982.0,483.8 999.0,481.3 1010.5,481.6 1023.0,482.5 1032.6,486.3 1042.0,492.0 1054.7,495.0 1067.4,498.3 1075.2,499.6 1080.6,499.6" fill="none" stroke="#8080ff" stroke-width="1" stroke-linejoin="round" shape-rendering="crispEdges" />
<polyline points="0.0,451.5 4.4,446.8 9.5,457.9 15.8,470.5 22.0,478.4 26.8,492.6 31.6,507.7 36.3,500.5 41.0,505.0 47.3,516.0 53.7,521.0 60.0,514.7 66.3,514.7 71.0,508.4 74.5,497.3 79.0,506.8 83.6,513.0 90.0,514.7 94.7,510.9 99.4,508.4 104.0,499.5 110.5,502.0 115.2,489.4 120.0,470.5 124.7,451.5 127.8,440.5 131.0,440.5 135.7,426.3 140.5,412.0 145.2,402.6 150.0,410.5 156.2,426.3 161.0,420.0 166.7,403.6 172.0,418.4 176.8,427.0 181.5,418.4 187.8,412.0 194.0,400.4 200.4,423.0 203.6,424.7 208.3,433.2 216.2,407.3 222.5,395.4 230.4,390.0 237.4,384.6 243.0,409.0 247.8,424.7 255.0,406.7 258.8,415.2 263.6,429.4 268.3,441.4 273.0,418.4 277.8,434.2 280.0,451.5 284.7,464.0 289.5,478.4 295.8,487.8 302.0,494.0 306.8,489.4 311.6,495.7 319.5,502.7 325.8,497.3 329.0,483.0 335.2,479.3 341.5,489.4 347.8,494.0 351.0,492.6 355.7,502.0 360.5,506.8 365.2,492.6 370.0,478.4 374.7,467.3 377.8,465.7 381.0,457.9 385.7,432.6 388.9,421.5 392.7,419.3 396.8,424.7 401.5,435.8 406.2,448.4 409.4,461.0 414.1,464.2 418.9,476.2 422.0,473.6 426.8,454.7 431.5,438.9 434.0,450.0 437.8,438.9 442.5,443.6 447.3,457.9 452.0,479.3 456.8,476.8 459.9,480.0 462.4,476.2 466.2,486.3 469.4,481.5 474.1,492.6 480.4,500.5 485.2,503.6 489.9,503.6 494.6,492.6 497.8,483.0 501.0,454.7 504.1,444.6 507.9,440.5 513.6,448.4 519.9,448.4 526.2,445.2 530.3,437.3 534.1,453.0 537.3,461.0 540.4,478.4 545.2,492.6 549.9,495.7 556.2,492.6 560.0,486.3 564.7,480.6 567.9,492.6 572.6,500.5 577.4,484.7 582.0,464.2 586.8,451.5 590.6,446.2 599.5,451.0 604.2,449.3 610.5,453.0 615.2,466.7 618.4,459.4 621.6,464.2 627.9,462.6 632.6,450.0 637.3,448.4 640.5,453.0 643.6,462.6 650.0,470.5 654.7,481.5 660.4,497.3 664.2,492.6 670.5,476.2 675.2,484.7 681.5,497.3 686.3,501.4 688.8,506.8 692.0,496.4 695.7,502.0 700.5,506.8 705.2,486.3 710.0,467.3 713.7,454.0 719.4,464.2 724.1,476.8 727.3,492.6 732.0,503.6 736.8,508.4 743.0,514.7 747.8,510.0 751.0,492.6 755.0,473.6 758.9,473.0 763.6,461.0 768.3,445.2 773.0,441.4 777.2,445.2 781.0,467.3 784.7,479.3 792.0,484.7 798.3,479.3 801.5,489.4 806.2,464.2 811.0,445.2 814.1,440.5 820.4,437.3 828.3,429.4 834.6,418.4 840.0,412.0 843.8,418.4 847.9,435.8 854.2,454.7 857.4,457.3 865.3,450.0 869.0,463.6 874.7,451.5 879.5,446.8 883.6,461.0 887.4,450.0 891.0,443.7 893.7,450.0 898.4,431.0 904.0,416.8 907.9,420.0 912.0,417.8 914.8,426.3 918.9,416.2 921.5,420.0 925.3,408.3 930.0,429.5 935.4,453.0 941.0,450.0 947.4,435.8 950.5,434.2 956.8,418.4 960.0,417.5 964.0,423.0 967.9,407.4 972.6,409.9 979.0,401.0 983.7,400.0 988.4,400.4 992.5,407.4 996.3,394.7 999.0,390.6 1002.6,396.3 1006.4,402.6 1010.5,395.4 1015.2,401.0 1020.0,407.4 1023.0,416.8 1026.3,435.8 1029.5,448.4 1034.2,465.8 1039.0,476.8 1042.0,480.6 1045.2,479.3 1048.4,481.0 1052.2,475.2 1055.3,487.9 1061.0,494.2 1066.7,498.9 1070.5,494.2 1075.2,484.7 1078.4,478.4 1080.6,475.2" fill="none" stroke="#ff0000" stroke-width="1" stroke-linejoin="round" shape-rendering="crispEdges" />
<path d="M54.5,518 C57.5,517 58.5,509 61,509 C63.5,509 64.5,517 67.5,518 Z" fill="#ff0000"/>
<path d="M68.5,518 C71.5,517 72.5,509 75,509 C77.5,509 78.5,517 81.5,518 Z" fill="#ff0000"/>
<path d="M82.5,518 C85.5,517 86.5,509 89,509 C91.5,509 92.5,517 95.5,518 Z" fill="#ff0000"/>
<path d="M94.0,518 C97.0,517 98.0,509 100.5,509 C103.0,509 104.0,517 107.0,518 Z" fill="#ff0000"/>
<path d="M743,518 L747,511.5 L753.5,518 Z" fill="#ff0000"/>
<rect x="0" y="511" width="1081" height="1" fill="#0000ff"/>
<g transform="translate(121,508)"><path d="M-5.5,0 L5.5,0 L8,2.8 L0,12 L-8,2.8 Z" fill="#ff4646"/><path d="M-5.5,0 L5.5,0 L8,2.8 L-8,2.8 Z" fill="#ff8c82"/><path d="M-4.5,3.6 Q0,0.6 4.5,3.6" stroke="#ffd8d2" stroke-width="1" fill="none"/><path d="M-2.5,4.6 Q0,2.8 2.5,4.6" stroke="#ffb0a8" stroke-width="0.8" fill="none"/><path d="M0,5 L0,11" stroke="#ff9a90" stroke-width="0.9"/></g>
<g transform="translate(707,508)"><path d="M-5.5,0 L5.5,0 L8,2.8 L0,12 L-8,2.8 Z" fill="#ff4646"/><path d="M-5.5,0 L5.5,0 L8,2.8 L-8,2.8 Z" fill="#ff8c82"/><path d="M-4.5,3.6 Q0,0.6 4.5,3.6" stroke="#ffd8d2" stroke-width="1" fill="none"/><path d="M-2.5,4.6 Q0,2.8 2.5,4.6" stroke="#ffb0a8" stroke-width="0.8" fill="none"/><path d="M0,5 L0,11" stroke="#ff9a90" stroke-width="0.9"/></g>
<g transform="translate(756.5,508)"><path d="M-5.5,0 L5.5,0 L8,2.8 L0,12 L-8,2.8 Z" fill="#ff4646"/><path d="M-5.5,0 L5.5,0 L8,2.8 L-8,2.8 Z" fill="#ff8c82"/><path d="M-4.5,3.6 Q0,0.6 4.5,3.6" stroke="#ffd8d2" stroke-width="1" fill="none"/><path d="M-2.5,4.6 Q0,2.8 2.5,4.6" stroke="#ffb0a8" stroke-width="0.8" fill="none"/><path d="M0,5 L0,11" stroke="#ff9a90" stroke-width="0.9"/></g>
<rect x="4.5" y="4.5" width="11" height="10" rx="2.5" fill="none" stroke="#808080"/><rect x="11" y="6" width="3" height="7" fill="#a0a0a0"/>
<path d="M1065.5,25.5 L1070.5,30.5 L1065.5,35.5 L1060.5,30.5 Z" fill="none" stroke="#8a8a8a" stroke-width="0.9"/>
<rect x="1078.5" y="25.5" width="11" height="10" rx="2.5" fill="none" stroke="#808080"/><rect x="1085" y="27" width="3" height="7" fill="#a0a0a0"/>
<circle cx="133" cy="30" r="6" fill="#7a7a7a"/><path d="M130,28.5 L133,31.5 L136,28.5" stroke="#1e1e1e" stroke-width="1" fill="none"/>
<circle cx="7" cy="373" r="6" fill="#7a7a7a"/><path d="M4,371.5 L7,374.5 L10,371.5" stroke="#1e1e1e" stroke-width="1" fill="none"/>
<path d="M48.5,355 L51.5,351.5 L54.5,355 Z" fill="#ff0000"/>
<path d="M794,355 L797,351.5 L800,355 Z" fill="#ff0000"/>
</svg>
<div id="tx">
<span class="t" style="left:27px;top:2px;color:#d4d4d4;"><span class="c">分时</span></span>
<span class="t" style="left:60px;top:2px;color:#d4d4d4;">1<span class="c">分钟</span></span>
<span class="t" style="left:100px;top:2px;color:#d4d4d4;">5<span class="c">分钟</span></span>
<span class="t" style="left:138.5px;top:2px;color:#d4d4d4;">15<span class="c">分钟</span></span>
<span class="t" style="left:185px;top:2px;color:#d4d4d4;">30<span class="c">分钟</span></span>
<span class="t" style="left:230px;top:2px;color:#d4d4d4;">60<span class="c">分钟</span></span>
<span class="t" style="left:277.5px;top:2px;color:#54ffff;"><span class="c">日线</span></span>
<span class="t" style="left:311.5px;top:2px;color:#d4d4d4;"><span class="c">周线</span></span>
<span class="t" style="left:344.5px;top:2px;color:#d4d4d4;"><span class="c">月线</span></span>
<span class="t" style="left:378.5px;top:2px;color:#d4d4d4;">10<span class="c">分钟</span></span>
<span class="t" style="left:424.5px;top:2px;color:#d4d4d4;">45<span class="c">日线</span></span>
<span class="t" style="left:470px;top:2px;color:#d4d4d4;"><span class="c">季线</span></span>
<span class="t" style="left:504.5px;top:2px;color:#d4d4d4;"><span class="c">年线</span></span>
<span class="t" style="left:537.5px;top:2px;color:#d4d4d4;"><span class="c">多周期</span></span>
<span class="t" style="left:581.5px;top:2px;color:#d4d4d4;"><span class="c">更多</span></span>
<span class="t" style="left:609px;top:2px;color:#d4d4d4;">&gt;</span>
<span class="t" style="left:789px;top:2px;width:34px;text-align:center;color:#d4d4d4;"><span class="c">复权</span></span>
<span class="t" style="left:823px;top:2px;width:34px;text-align:center;color:#54ffff;"><span class="c">叠加</span></span>
<span class="t" style="left:858px;top:2px;width:34px;text-align:center;color:#d4d4d4;"><span class="c">多股</span></span>
<span class="t" style="left:893px;top:2px;width:34px;text-align:center;color:#d4d4d4;"><span class="c">统计</span></span>
<span class="t" style="left:928px;top:2px;width:34px;text-align:center;color:#d4d4d4;"><span class="c">画线</span></span>
<span class="t" style="left:963px;top:2px;width:34px;text-align:center;color:#d4d4d4;">F10</span>
<span class="t" style="left:998px;top:2px;width:34px;text-align:center;color:#d4d4d4;"><span class="c">简框</span></span>
<span class="t" style="left:1033px;top:2px;width:34px;text-align:center;color:#d4d4d4;"><span class="c">标记</span></span>
<span class="t" style="left:1068px;top:2px;width:34px;text-align:center;color:#d4d4d4;">+<span class="c">自选</span></span>
<span class="t" style="left:1103px;top:2px;width:41px;text-align:center;color:#d4d4d4;"><span class="c">返回</span></span>
<span class="t" style="left:1px;top:22px;color:#d4d4d4;"><span class="c">万业企业</span>(<span class="c">日线</span>.<span class="c">前复权</span>)</span>
<span class="t" style="left:143.5px;top:22px;color:#ffffff;letter-spacing:-0.25px;">MA5: 18.14</span>
<span class="t" style="left:208.5px;top:22px;color:#ffff00;letter-spacing:-0.25px;">MA10: 18.60</span>
<span class="t" style="left:281px;top:22px;color:#ff00ff;letter-spacing:-0.25px;">MA20: 19.62</span>
<span class="t" style="left:352.5px;top:22px;color:#00e600;letter-spacing:-0.25px;">MA60: 17.66</span>
<span class="t" style="left:1px;top:36px;color:#d4d4d4;">2025/11/10/<span class="c">一</span></span>
<span class="t" style="left:80px;top:36px;color:#ff3232;"><span class="c">开</span>18.48</span>
<span class="t" style="left:125.5px;top:36px;color:#ff3232;"><span class="c">高</span>18.84</span>
<span class="t" style="left:172px;top:36px;color:#00e600;"><span class="c">低</span>18.34</span>
<span class="t" style="left:217.5px;top:36px;color:#ff3232;"><span class="c">收</span>18.50</span>
<span class="t" style="left:264px;top:36px;color:#c0c000;"><span class="c">量</span>185890</span>
<span class="t" style="left:320.5px;top:36px;color:#d4d4d4;"><span class="c">额</span>3.45<span class="c">亿</span></span>
<span class="t" style="left:371.5px;top:36px;color:#ff3232;"><span class="c">幅</span>0.08(0.43%)</span>
<span class="t" style="left:454px;top:36px;color:#d4d4d4;"><span class="c">换</span>2.00%</span>
<span class="t" style="left:503.5px;top:36px;color:#d4d4d4;"><span class="c">流通</span>9.31<span class="c">亿</span></span>
<span class="t" style="left:567.5px;top:36px;color:#c0c000;"><span class="c">半导体材料</span></span>
<span class="t" style="left:1100px;width:38px;text-align:right;top:80px;color:#ff3232;">22.29</span>
<span class="t" style="left:1100px;width:38px;text-align:right;top:120px;color:#ff3232;">20.26</span>
<span class="t" style="left:1100px;width:38px;text-align:right;top:156px;color:#ff3232;">18.42</span>
<span class="t" style="left:1100px;width:38px;text-align:right;top:192px;color:#ff3232;">16.58</span>
<span class="t" style="left:1100px;width:38px;text-align:right;top:225px;color:#ff3232;">14.92</span>
<span class="t" style="left:1100px;width:38px;text-align:right;top:254px;color:#ff3232;">13.43</span>
<span class="t" style="left:1100px;width:38px;text-align:right;top:280px;color:#ff3232;">12.09</span>
<span class="t" style="left:1100px;width:38px;text-align:right;top:304px;color:#ff3232;">10.88</span>
<span class="t" style="left:1100px;width:38px;text-align:right;top:326px;color:#ff3232;">9.79</span>
<span class="t" style="left:1100px;width:38px;text-align:right;top:345px;color:#ff3232;">8.81</span>
<span class="t" style="left:1100px;width:38px;text-align:right;top:398px;color:#ff3232;">100.0</span>
<span class="t" style="left:1100px;width:38px;text-align:right;top:426px;color:#ff3232;">75.00</span>
<span class="t" style="left:1100px;width:38px;text-align:right;top:451px;color:#ff3232;">50.00</span>
<span class="t" style="left:1028px;top:55px;color:#c8c8c8;">23.80</span>
<span class="t" style="left:112px;top:340px;color:#c8c8c8;">9.10</span>
<span class="t" style="left:17px;top:365px;color:#ffffff;"><span class="c">黑马因子副图</span></span>
<span class="t" style="left:93.5px;top:365px;color:#a05000;"><span class="c">彩线</span>1: 30.57</span>
<span class="t" style="left:167px;top:365px;color:#008b8b;"><span class="c">彩线</span>2: 18.92</span>
<span class="t" style="left:239.5px;top:365px;color:#8080ff;"><span class="c">彩线</span>3: 11.69</span>
<span class="t" style="left:312.5px;top:365px;color:#ff0000;"><span class="c">彩线</span>4: 35.39</span>
<span class="t" style="left:386.5px;top:365px;color:#ffffff;">: 100.00</span>
<span class="t" style="left:435px;top:365px;color:#0000ff;"><span class="c">黑马</span>: 0.00</span>
<span class="m" style="left:265px;top:350px;width:4px;background:#008b8b;clip-path:none;"></span>
<span class="m" style="left:269px;top:350px;background:#a04800;">榜</span>
<span class="m" style="left:561px;top:350px;background:#008000;">跌</span>
<span class="m" style="left:992px;top:350px;background:#800000;">涨</span>
<span class="m" style="left:1028px;top:350px;background:#008000;">减</span>
<span class="m" style="left:1048px;top:350px;background:#103070;">财</span>
<span class="t" style="left:48.5px;top:353px;width:7px;text-align:center;color:#ff0000;font-weight:bold;font-size:9.5px;line-height:14px;height:14px;">S</span>
<span class="t" style="left:794px;top:353px;width:7px;text-align:center;color:#ff0000;font-weight:bold;font-size:9.5px;line-height:14px;height:14px;">S</span>
</div>
<svg width="1145" height="526" viewBox="0 0 1145 526" style="pointer-events:none">
<path d="M268.5,352.5 L266.5,356.5 M268,355 L268,362" stroke="#ffffff" stroke-width="1" fill="none"/>
</svg>
</div>
</body></html>
